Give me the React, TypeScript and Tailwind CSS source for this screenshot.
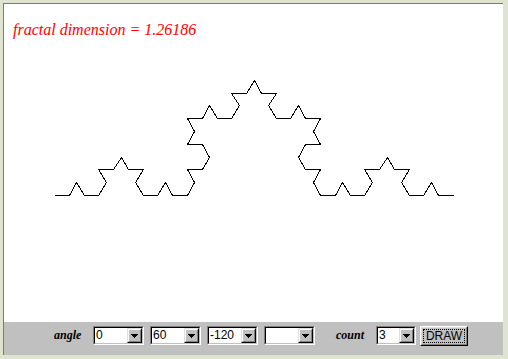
import React from "react";

type P = [number, number];

function koch(a: P, b: P, depth: number, out: P[]) {
  if (depth === 0) {
    out.push(b);
    return;
  }
  const dx = (b[0] - a[0]) / 3;
  const dy = (b[1] - a[1]) / 3;
  const p1: P = [a[0] + dx, a[1] + dy];
  const p3: P = [a[0] + 2 * dx, a[1] + 2 * dy];
  const c = 0.5;
  const s = Math.sqrt(3) / 2;
  const p2: P = [p1[0] + dx * c + dy * s, p1[1] - dx * s + dy * c];
  koch(a, p1, depth - 1, out);
  koch(p1, p2, depth - 1, out);
  koch(p2, p3, depth - 1, out);
  koch(p3, b, depth - 1, out);
}

const start: P = [50, 191];
const end: P = [449, 191];
const pts: P[] = [start];
koch(start, end, 3, pts);
const pointsStr = pts
  .map((p) => `${Math.round(p[0]) + 0.5},${Math.round(p[1]) + 0.5}`)
  .join(" ");

function Select({ value, width }: { value: string; width: string }) {
  return (
    <div
      className={`${width} h-[19px] border border-t-[#808080] border-l-[#808080] border-b-white border-r-white`}
    >
      <div className="h-full w-full flex border border-t-black border-l-black border-b-[#c0c0c0] border-r-[#c0c0c0] bg-white">
        <div className="flex-1 pl-[1px] text-[12px] leading-[15px] text-black font-['Liberation_Sans',Arial,sans-serif]">
          {value}
        </div>
        <div className="w-[15px] h-full bg-[#c0c0c0] border border-t-[#dfdfdf] border-l-[#dfdfdf] border-b-black border-r-black">
          <div className="w-full h-full border border-t-white border-l-white border-b-[#808080] border-r-[#808080] flex items-center justify-center">
            <svg width="7" height="4" viewBox="0 0 7 4" shapeRendering="crispEdges">
              <path d="M0 0h7v1H0zM1 1h5v1H1zM2 2h3v1H2zM3 3h1v1H3z" fill="#000" />
            </svg>
          </div>
        </div>
      </div>
    </div>
  );
}

export default function App() {
  return (
    <div className="w-[508px] h-[359px] bg-[#dfe4cf] pt-[3px] pl-[3px]">
      <div className="w-[500px] h-[352px] flex flex-col border-t border-l border-[#7a7a7a]">
        <div className="relative flex-1 bg-white">
          <svg
            className="absolute inset-0"
            width="499"
            height="318"
            shapeRendering="crispEdges"
          >
            <polyline points={pointsStr} fill="none" stroke="#000" strokeWidth="1" />
          </svg>
          <div className="relative pt-[18px] pl-[9px] text-[16px] leading-[16px] italic text-[#ff0000] font-['Liberation_Serif','Times_New_Roman',serif]">
            fractal dimension = 1.26186
          </div>
        </div>
        <div className="h-[33px] bg-[#c0c0c0] flex items-start pt-[4px] pl-[50px]">
          <div className="w-[27px] h-[19px] leading-[19px] text-[12px] italic font-bold text-black font-['Liberation_Serif','Times_New_Roman',serif]">
            angle
          </div>
          <div className="ml-[12px]">
            <Select value="0" width="w-[51px]" />
          </div>
          <div className="ml-[6px]">
            <Select value="60" width="w-[51px]" />
          </div>
          <div className="ml-[6px]">
            <Select value="-120" width="w-[51px]" />
          </div>
          <div className="ml-[6px]">
            <Select value="" width="w-[51px]" />
          </div>
          <div className="ml-[21px] w-[27px] h-[19px] leading-[19px] text-[12px] italic font-bold text-black font-['Liberation_Serif','Times_New_Roman',serif]">
            count
          </div>
          <div className="ml-[13px]">
            <Select value="3" width="w-[40px]" />
          </div>
          <div className="ml-[4px] w-[48px] h-[20px] border border-t-white border-l-white border-b-black border-r-black bg-[#c0c0c0]">
            <div className="w-full h-full border border-t-[#dfdfdf] border-l-[#dfdfdf] border-b-[#808080] border-r-[#808080] p-[1px]">
              <div className="w-full h-full border border-dotted border-black flex items-center justify-center text-[12px] leading-[12px] text-black font-['Liberation_Sans',Arial,sans-serif]">
                DRAW
              </div>
            </div>
          </div>
        </div>
      </div>
    </div>
  );
}
